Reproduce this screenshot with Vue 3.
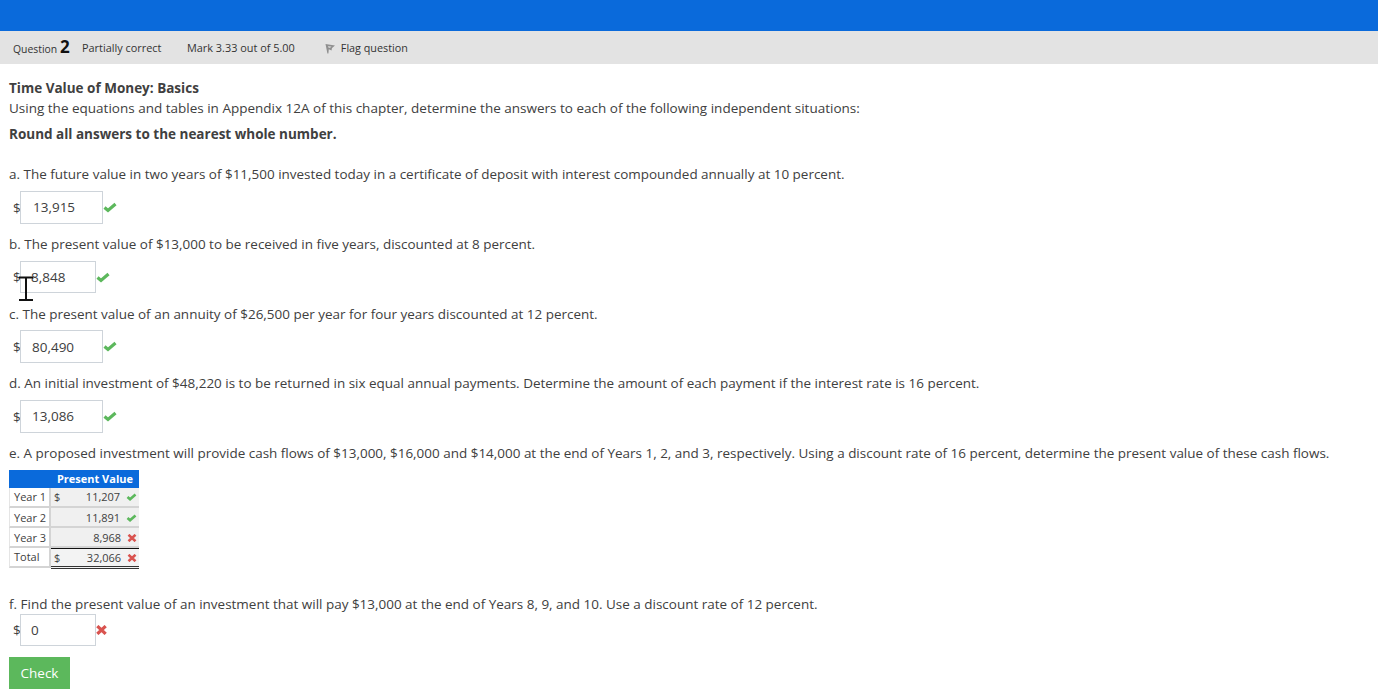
<script setup>
const rowsTable = [
  { label: 'Year 1', sign: '$', value: '11,207', ok: true },
  { label: 'Year 2', sign: '', value: '11,891', ok: true },
  { label: 'Year 3', sign: '', value: '8,968', ok: false },
  { label: 'Total', sign: '$', value: '32,066', ok: false, total: true }
];
</script>

<template>
  <div class="page">
    <div class="topbar"></div>
    <div class="info">
      <span class="qno">Question <b>2</b></span>
      <span class="state">Partially correct</span>
      <span class="mark">Mark 3.33 out of 5.00</span>
      <span class="flag">
        <svg width="11" height="11" viewBox="0 0 11 11"><path d="M0.5 1 L10 2.5 L7 5 L6.5 7.5 L3.8 6.2 L3.4 10.5 L2.4 10.5 Z" fill="#8f8f8f" /><path d="M3 3 L6.5 3.5 L5 5 L3.5 4.8 Z" fill="#d0d0d0" /></svg>
        Flag question
      </span>
    </div>

    <div class="content">
      <div class="intro">
        <p class="strong">Time Value of Money: Basics</p>
        <p>Using the equations and tables in Appendix 12A of this chapter, determine the answers to each of the following independent situations:</p>
        <p class="strong round">Round all answers to the nearest whole number.</p>
      </div>

      <p class="q">a. The future value in two years of $11,500 invested today in a certificate of deposit with interest compounded annually at 10 percent.</p>
      <div class="answer">
        <span class="dollar">$</span>
        <span class="box wide pad-a">13,915</span>
        <svg class="ico" width="14" height="11" viewBox="0 0 14 11"><path d="M1.5 5.5 L5 8.5 L12.5 2" fill="none" stroke="#5cb85c" stroke-width="3.2" /></svg>
      </div>

      <p class="q">b. The present value of $13,000 to be received in five years, discounted at 8 percent.</p>
      <div class="answer short">
        <span class="dollar">$</span>
        <span class="box narrow">8,848</span>
        <svg class="ico" width="14" height="11" viewBox="0 0 14 11"><path d="M1.5 5.5 L5 8.5 L12.5 2" fill="none" stroke="#5cb85c" stroke-width="3.2" /></svg>
        <svg class="cursor" width="16" height="26" viewBox="0 0 16 26"><path d="M1 1.5 H15 M8 1.5 V24 M1 24 H15" fill="none" stroke="#111" stroke-width="2" /></svg>
      </div>

      <p class="q after-short">c. The present value of an annuity of $26,500 per year for four years discounted at 12 percent.</p>
      <div class="answer tight">
        <span class="dollar">$</span>
        <span class="box wide low">80,490</span>
        <svg class="ico" width="14" height="11" viewBox="0 0 14 11"><path d="M1.5 5.5 L5 8.5 L12.5 2" fill="none" stroke="#5cb85c" stroke-width="3.2" /></svg>
      </div>

      <p class="q">d. An initial investment of $48,220 is to be returned in six equal annual payments. Determine the amount of each payment if the interest rate is 16 percent.</p>
      <div class="answer">
        <span class="dollar">$</span>
        <span class="box wide">13,086</span>
        <svg class="ico" width="14" height="11" viewBox="0 0 14 11"><path d="M1.5 5.5 L5 8.5 L12.5 2" fill="none" stroke="#5cb85c" stroke-width="3.2" /></svg>
      </div>

      <p class="q">e. A proposed investment will provide cash flows of $13,000, $16,000 and $14,000 at the end of Years 1, 2, and 3, respectively. Using a discount rate of 16 percent, determine the present value of these cash flows.</p>
      <div class="pv">
        <div class="pv-head">Present Value</div>
        <div v-for="row in rowsTable" :key="row.label" class="pv-row">
          <div class="pv-label">{{ row.label }}</div>
          <div class="pv-cell" :class="{ total: row.total }">
            <span>{{ row.sign }}</span>
            <span class="pv-val">
              {{ row.value }}
              <svg v-if="row.ok" width="11" height="8" viewBox="0 0 14 11"><path d="M1.5 5.5 L5 8.5 L12.5 2" fill="none" stroke="#5cb85c" stroke-width="3.6" /></svg>
              <svg v-else width="10" height="8" viewBox="0 0 10 8"><path d="M1.5 0.8 L8.5 7.2 M8.5 0.8 L1.5 7.2" fill="none" stroke="#d9534f" stroke-width="2.6" /></svg>
            </span>
          </div>
        </div>
      </div>

      <p class="q last">f. Find the present value of an investment that will pay $13,000 at the end of Years 8, 9, and 10. Use a discount rate of 12 percent.</p>
      <div class="answer zero">
        <span class="dollar">$</span>
        <span class="box narrow">0</span>
        <svg class="ico" width="11" height="10" viewBox="0 0 10 9"><path d="M1.2 1 L8.8 8 M8.8 1 L1.2 8" fill="none" stroke="#d9534f" stroke-width="3" /></svg>
      </div>

      <button class="check">Check</button>
    </div>
  </div>
</template>

<style scoped>
.page {
  font-family: "Open Sans", sans-serif;
  font-size: 13.5px;
  line-height: 20px;
  color: #404040;
}

p {
  margin: 0;
}

.topbar {
  height: 31px;
  background: #0a6adb;
}

.info {
  height: 33px;
  background: #e3e3e3;
  display: flex;
  align-items: center;
  padding-left: 13px;
  font-size: 11px;
  color: #333;
}

.qno {
  width: 69px;
  font-size: 10.4px;
}

.qno b {
  font-size: 17px;
  font-weight: 700;
  color: #111;
}

.state {
  width: 105px;
  font-size: 10.9px;
}

.mark {
  width: 138px;
  font-size: 10.9px;
}

.flag {
  font-size: 10.8px;
}

.flag svg {
  margin-right: 2px;
  vertical-align: -2px;
}

.content {
  padding: 14px 9px 0;
}

.strong {
  font-weight: 700;
}

.round {
  margin-top: 6px;
}

.q {
  margin-top: 10px;
  font-size: 13.48px;
}

.intro + .q {
  margin-top: 20px;
}

.q.after-short {
  margin-top: 11px;
}

.answer {
  position: relative;
  display: flex;
  align-items: center;
  height: 33px;
  margin-top: 7px;
  padding-left: 4px;
}

.answer.tight {
  margin-top: 6px;
}

.answer.short {
  height: 32px;
}

.answer.zero {
  height: 32px;
  margin-top: 0;
}

.dollar {
  width: 7px;
  color: #404040;
}

.box {
  box-sizing: border-box;
  height: 100%;
  display: flex;
  align-items: center;
  border: 1px solid #ced4da;
  background: #fff;
  padding-left: 11px;
  padding-bottom: 1px;
}

.box.low {
  padding-bottom: 0;
}

.box.wide {
  width: 83px;
}

.box.narrow {
  width: 76px;
  padding-left: 10px;
}

.pad-a {
  padding-left: 12px;
}

.cursor {
  position: absolute;
  left: 9px;
  top: 15px;
}

.pv {
  width: 130px;
  margin-top: 7px;
  font-size: 11px;
  line-height: 18px;
}

.pv-head {
  height: 18px;
  background: #0a6adb;
  color: #fff;
  font-weight: 700;
  text-align: right;
  padding-right: 6px;
}

.pv-row {
  display: flex;
  height: 20px;
  box-sizing: border-box;
}

.pv-row:nth-child(3),
.pv-row:nth-child(4) {
  line-height: 20px;
}

.pv-label {
  box-sizing: border-box;
  width: 42px;
  padding-left: 4px;
  background: #fff;
  border-right: 2px solid #d4d4d4;
  border-bottom: 2px solid #d4d4d4;
  border-left: 1px solid #e5e5e5;
}

.pv-cell {
  box-sizing: border-box;
  flex: 1;
  display: flex;
  justify-content: space-between;
  padding: 0 2px 0 3px;
  background: #f0f0f0;
  border-bottom: 2px solid #d4d4d4;
}

.pv-cell.total {
  background: #f3f3f3;
  border-top: 1px solid #111;
  border-bottom: 3px double #333;
  height: 21px;
  line-height: 17px;
}

.pv-val svg {
  margin-left: 3px;
}

.q.last {
  margin-top: 26px;
}

.check {
  display: block;
  width: 61px;
  height: 32px;
  margin-top: 11px;
  padding: 0;
  border: none;
  background: #5cb85c;
  color: #fff;
  font-family: "Open Sans", sans-serif;
  font-size: 13.5px;
}
</style>
